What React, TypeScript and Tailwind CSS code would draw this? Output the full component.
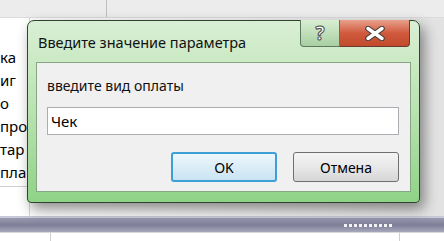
import React from "react";

const leftRows = ["ка", "иг", "о", "про", "тар", "пла"];

export default function App() {
  return (
    <div
      className="relative w-[444px] h-[241px] overflow-hidden bg-white text-black"
      style={{ fontFamily: '"Noto Sans", "Open Sans", sans-serif' }}
    >
      {/* background sheet */}
      <div className="flex flex-col h-full">
        <div className="h-[18px] flex bg-[#ececec] border-b border-[#dcdcdc]">
          <div className="w-[107px] border-r border-[#bdbdbd]" />
          <div className="flex-1" />
        </div>
        <div className="flex-1 flex bg-gradient-to-r from-white via-[#f2f2f2] to-[#e2e2e2]">
          <div className="w-[30px] pt-[28px] flex flex-col bg-white border-r border-[#d6d6d6]">
            {leftRows.map((r) => (
              <div key={r} className="h-[23px] text-[15px] leading-[23px] whitespace-nowrap">
                {r}
              </div>
            ))}
            <div className="border-b border-[#cfcfcf] mt-[2px]" />
          </div>
          <div className="flex-1" />
        </div>
        <div className="h-[16px] flex flex-col">
          <div className="h-[2px] bg-[#c8c8d8]" />
          <div className="flex-1 flex items-center justify-end pr-[52px] bg-gradient-to-b from-[#9a9ab0] via-[#7e7e98] to-[#a8a8bc]">
            <div className="flex gap-[2px]">
              {Array.from({ length: 10 }).map((_, i) => (
                <div key={i} className="w-[3px] h-[3px] bg-white/90" />
              ))}
            </div>
          </div>
        </div>
        <div className="h-[9px] flex bg-white border-t border-[#d8d8d8]">
          <div className="w-[51px] border-r border-[#cfcfcf]" />
          <div className="w-[349px] border-r border-[#cfcfcf]" />
        </div>
      </div>

      {/* dialog */}
      <div className="absolute left-[27px] top-[20px] w-[393px] h-[183px] flex flex-col rounded-t-[7px] rounded-b-[4px] border border-[#2f432f] bg-gradient-to-b from-[#d9efd4] via-[#b9e2b1] to-[#8fd386] shadow-[4px_6px_14px_rgba(0,0,0,0.45)]">
        <div className="h-[41px] relative flex items-center pl-[10px]">
          <span className="text-[14.5px] text-[#111] pt-[2px]">Введите значение параметра</span>
          <div className="absolute right-[9px] top-[-1px] flex h-[27px]">
            <div className="w-[40px] flex items-center justify-center rounded-bl-[4px] border border-t-0 border-[#5d7b5a] bg-gradient-to-b from-[#d8eed3] to-[#a9cfa2]">
              <span
                className="text-[19px] font-bold text-white leading-none"
                style={{ WebkitTextStroke: "1px #4a4a4a" }}
              >
                ?
              </span>
            </div>
            <div className="w-[70px] flex items-center justify-center rounded-br-[4px] border border-l-0 border-t-0 border-[#6b3a2e] bg-gradient-to-b from-[#e8a08c] via-[#d05a3e] to-[#c24a2c]">
              <svg width="22" height="15" viewBox="0 0 22 15">
                <path d="M4 2.5 L18 12.5 M18 2.5 L4 12.5" stroke="#3a3a3a" strokeWidth="5.5" strokeLinecap="round" />
                <path d="M4 2.5 L18 12.5 M18 2.5 L4 12.5" stroke="#fff" strokeWidth="3.5" strokeLinecap="round" />
              </svg>
            </div>
          </div>
        </div>
        <div className="mx-[8px] h-[130px] border border-[#86a783] bg-[#f0f0f0] flex flex-col px-[10px]">
          <div className="h-[44px] flex items-center text-[14px] text-[#111] pt-[1px]">введите вид оплаты</div>
          <div className="h-[28px] mr-[1px] border border-[#abadb3] bg-white flex items-center pl-[3px] text-[15px]">
            Чек
          </div>
          <div className="flex justify-end gap-[16px] mt-[17px] mr-[1px]">
            <div className="w-[106px] h-[30px] rounded-[3px] border-2 border-[#3c9fd6] bg-gradient-to-b from-[#eef7fc] to-[#c9e3f3] flex items-center justify-center text-[14px]">
              OK
            </div>
            <div className="w-[106px] h-[30px] rounded-[3px] border border-[#707070] bg-gradient-to-b from-[#f4f4f4] via-[#e8e8e8] to-[#d6d6d6] flex items-center justify-center text-[14px]">
              Отмена
            </div>
          </div>
        </div>
      </div>
    </div>
  );
}
